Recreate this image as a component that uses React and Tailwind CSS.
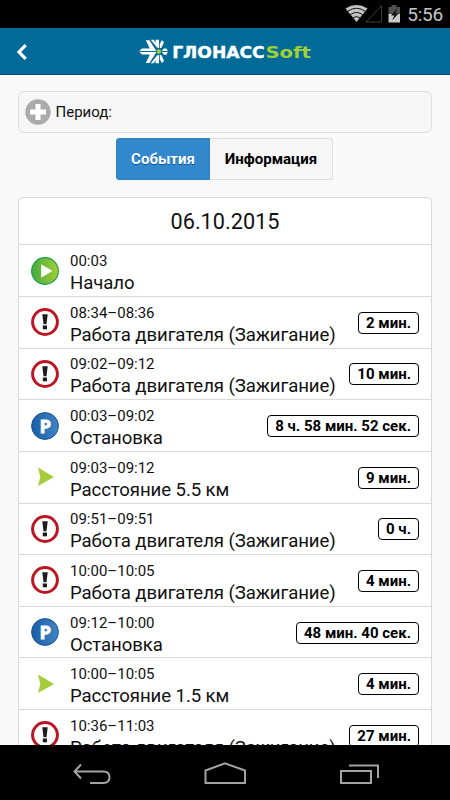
import React from "react";

const events = [
  { icon: "start", time: "00:03", title: "Начало" },
  { icon: "alert", time: "08:34–08:36", title: "Работа двигателя (Зажигание)", duration: "2 мин." },
  { icon: "alert", time: "09:02–09:12", title: "Работа двигателя (Зажигание)", duration: "10 мин." },
  { icon: "parking", time: "00:03–09:02", title: "Остановка", duration: "8 ч. 58 мин. 52 сек." },
  { icon: "move", time: "09:03–09:12", title: "Расстояние 5.5 км", duration: "9 мин." },
  { icon: "alert", time: "09:51–09:51", title: "Работа двигателя (Зажигание)", duration: "0 ч." },
  { icon: "alert", time: "10:00–10:05", title: "Работа двигателя (Зажигание)", duration: "4 мин." },
  { icon: "parking", time: "09:12–10:00", title: "Остановка", duration: "48 мин. 40 сек." },
  { icon: "move", time: "10:00–10:05", title: "Расстояние 1.5 км", duration: "4 мин." },
  { icon: "alert", time: "10:36–11:03", title: "Работа двигателя (Зажигание)", duration: "27 мин." },
];

function StatusBar() {
  return (
    <div className="h-7 shrink-0 bg-black flex items-center justify-end pr-[7px]">
      <svg className="w-[62px] h-7" viewBox="0 0 62 28">
        {/* Wi-Fi */}
        <path d="M0.5 8.4Q11.5 1.8 22.5 8.4L11.5 22Z" fill="#c4c4c4" />
        <path d="M2.8 11.2Q11.5 5.3 20.2 11.2M5.4 14.6Q11.5 10.3 17.6 14.6M8 17.8Q11.5 15.4 15 17.8" fill="none" stroke="#000" strokeWidth="0.9" />
        {/* Signal */}
        <path d="M36.5 5.5V22H21Z" fill="none" stroke="#3c3c3c" strokeWidth="1" />
        {/* Battery */}
        <path d="M46.5 5H51.5V7H55V14H43.5V7H46.5Z" fill="#505050" />
        <path d="M43.5 14H55V22.5H43.5Z" fill="#c9c9c9" />
        <path d="M52.3 8.5L46 15.5H49.3L47.2 20.5L53.5 13.5H50.4Z" fill="#111" />
      </svg>
      <span className="text-[19px] leading-7 text-[#c6c6c6] tracking-[-0.2px] pt-[2px]">5:56</span>
    </div>
  );
}

function Logo() {
  return (
    <svg className="w-[176px] h-[28px]" viewBox="0 0 176 28">
      <g fill="#fff">
        <path d="M0.3 14L3 11.5H10.8L6.8 3.2H10.4L17 13.4V14Z" />
        <path d="M11.8 2.8H14.8L16.6 6V2.8H20V11L18 10.6Z" />
        <path d="M20.8 11V7.2L22.8 3L25 5.2L22.4 11Z" />
        <path d="M22.6 14L25 11.4H27.4L28.8 14Z" />
        <path d="M0.3 15.1L3 17.6H10.8L6.8 25.9H10.4L17 15.7V15.1Z" />
        <path d="M11.8 26.3H14.8L16.6 23.1V26.3H20V18.1L18 18.5Z" />
        <path d="M20.8 18.1V21.9L22.8 26.1L25 23.9L22.4 18.1Z" />
        <path d="M22.6 15.1L25 17.7H27.4L28.8 15.1Z" />
      </g>
      <circle cx="19.8" cy="14.6" r="3" fill="#006b99" />
      <circle cx="19.8" cy="14.6" r="2.3" fill="#9ccb34" />
      <text x="33.2" y="20.7" fontSize="16.6" fontWeight="700" fontFamily="DejaVu Sans" fill="#fff" stroke="#fff" strokeWidth="0.4" textLength="92.5" lengthAdjust="spacingAndGlyphs">ГЛОНАСС</text>
      <text x="126.5" y="20.7" fontSize="16.6" fontWeight="700" fontFamily="DejaVu Sans" fill="#a2cf33" textLength="45.5" lengthAdjust="spacingAndGlyphs">Soft</text>
    </svg>
  );
}

function Header() {
  return (
    <div className="h-[47px] shrink-0 bg-[#006b99] border-b border-[#004d80] flex items-center pl-[16px]">
      <svg className="w-3 h-[18px] mt-1 mr-[111px]" viewBox="0 0 12 18">
        <path d="M9.7 1.2L3 8L9.7 14.8" fill="none" stroke="#fff" strokeWidth="3.2" />
      </svg>
      <Logo />
    </div>
  );
}

function EventIcon({ type }) {
  if (type === "start") {
    return (
      <svg className="size-7" viewBox="0 0 28 28">
        <defs>
          <linearGradient id="startFill" x1="0" x2="1">
            <stop offset="0" stopColor="#45ab3e" />
            <stop offset="1" stopColor="#a5cc38" />
          </linearGradient>
        </defs>
        <circle cx="14" cy="14" r="13.4" fill="url(#startFill)" stroke="#16a04b" strokeWidth="1.1" />
        <path d="M10.2 7.3V20.7L21.5 14Z" fill="#fff" />
      </svg>
    );
  }
  if (type === "alert") {
    return (
      <svg className="size-7" viewBox="0 0 28 28">
        <circle cx="14" cy="14" r="12.4" fill="#fff" stroke="#bd1622" strokeWidth="3" />
        <path d="M11.3 6.2H16.7L15.5 16.3H12.5Z" fill="#1c1c1c" />
        <rect x="11.8" y="17.5" width="4.2" height="3.8" fill="#1c1c1c" />
      </svg>
    );
  }
  if (type === "parking") {
    return (
      <svg className="size-7" viewBox="0 0 28 28">
        <defs>
          <linearGradient id="parkFill" x1="0" x2="1">
            <stop offset="0" stopColor="#1c5da6" />
            <stop offset="1" stopColor="#3f84c4" />
          </linearGradient>
        </defs>
        <circle cx="14" cy="14" r="13.4" fill="url(#parkFill)" stroke="#185498" strokeWidth="1" />
        <text x="14.4" y="20.5" textAnchor="middle" fontSize="18.5" fontWeight="700" fontFamily="Open Sans" fill="#fff" stroke="#fff" strokeWidth="0.8">P</text>
      </svg>
    );
  }
  return (
    <svg className="size-7" viewBox="0 0 28 28">
      <path d="M7 4.5L23 14L7 23L9.3 14Z" fill="#a5cd39" />
    </svg>
  );
}

function EventRow({ event }) {
  return (
    <li className="h-[51.65px] shrink-0 border-t border-[#d9d9d9] flex items-center pl-3 pr-[12px]">
      <EventIcon type={event.icon} />
      <div className="flex-1 pl-[11px] pt-[5px] whitespace-nowrap text-[#111]">
        <div className="text-[15px] leading-[20px]">{event.time}</div>
        <div className="text-[18.6px] leading-[24px] tracking-[-0.09px]">{event.title}</div>
      </div>
      {event.duration && (
        <span className="h-[22px] shrink-0 rounded-[4px] border border-black px-[7px] text-[15px] leading-5 font-bold whitespace-nowrap mt-px">
          {event.duration}
        </span>
      )}
    </li>
  );
}

function NavBar() {
  return (
    <div className="h-[55px] shrink-0 bg-black">
      <svg className="w-full h-full" viewBox="0 0 450 55" fill="none" stroke="#a3a3a3" strokeWidth="2">
        <path d="M81 19.5L74.5 26.5L81 33.5M75 26.5H103.5Q109.5 26.5 109.5 32.3Q109.5 38 103.5 38H90" />
        <path d="M205.5 38V25.5L225 18.3L245 25.5V38Z" />
        <path d="M341 26H371V38H341ZM349 20.5H378V33" />
      </svg>
    </div>
  );
}

export default function App() {
  return (
    <div className="w-[450px] h-[800px] flex flex-col overflow-hidden bg-[#f9f9f9] text-black font-[Roboto,sans-serif]">
      <StatusBar />
      <Header />
      <main className="flex-1 min-h-0 overflow-hidden flex flex-col pl-[18px] pr-[18px] pt-[16px]">
        <div className="h-[42px] shrink-0 rounded-[6px] border border-[#dddddd] bg-[#f6f6f6] flex items-center pl-[6px]">
          <svg className="size-[26px]" viewBox="0 0 26 26">
            <circle cx="13" cy="13" r="12.7" fill="#ababab" />
            <path d="M13 5V21M5 13H21" stroke="#fff" strokeWidth="5" />
          </svg>
          <span className="text-[15px] pl-[4.5px] text-[#111]">Период:</span>
        </div>

        <div className="h-[42px] shrink-0 self-center flex mt-[5px] mr-px text-[15px] font-bold leading-10">
          <div className="w-[94px] text-center rounded-l-[3px] border border-[#2f80c2] bg-[#3388cc] text-white [text-shadow:0_1px_0_#005599]">События</div>
          <div className="w-[123px] text-center rounded-r-[3px] border border-l-0 border-[#dddddd] bg-[#f6f6f6]">Информация</div>
        </div>

        <ul className="shrink-0 mt-[17px] rounded-[5px] border border-[#d9d9d9] bg-white flex flex-col">
          <li className="h-[46.3px] text-center text-[21.7px] text-[#111] leading-[47px]">06.10.2015</li>
          {events.map((event) => (
            <EventRow key={event.time + event.title + event.icon} event={event} />
          ))}
        </ul>
      </main>
      <NavBar />
    </div>
  );
}
